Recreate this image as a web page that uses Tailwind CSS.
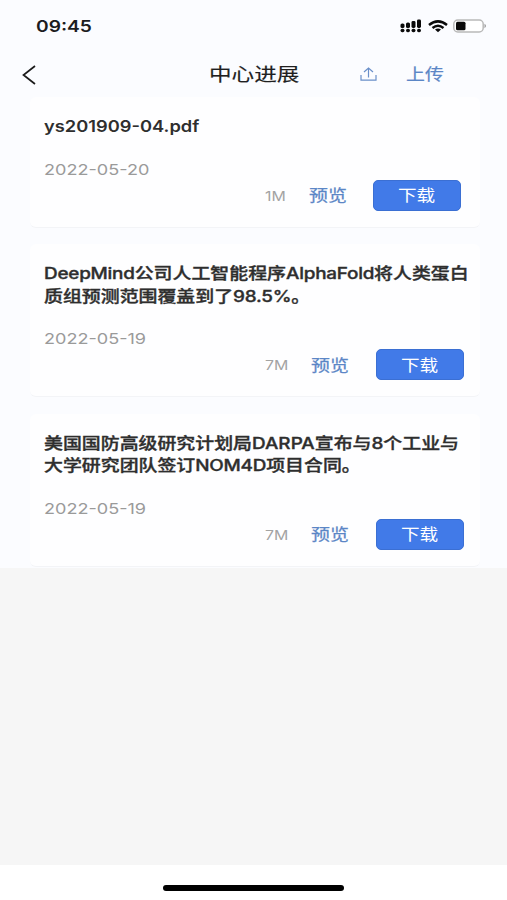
<!DOCTYPE html>
<html lang="zh-CN">
<head>
    <meta charset="UTF-8">
    <meta name="viewport" content="width=device-width, initial-scale=1.0">
    <title>中心进展</title>
    <script src="https://cdn.jsdelivr.net/npm/@tailwindcss/browser@4"></script>
</head>
<body class="bg-[#f6f6f6] font-['Inter','Noto_Sans_CJK_SC',sans-serif] h-[900px] flex flex-col overflow-hidden whitespace-nowrap">

    <div class="bg-[#fbfcff] h-[568px] shrink-0">
        <!-- Status bar -->
        <div class="h-[52px] flex items-center justify-between pl-9 pr-5">
            <span class="text-[16px] font-semibold text-[#1c1c1e] origin-left scale-x-[1.2]">09:45</span>
            <div class="flex items-center">
                <svg class="w-[22px] h-[14px] mr-[6px]" viewBox="0 0 22 14" fill="#0a0a0a">
                    <rect x="0.5" y="4.5" width="4" height="4.5" rx="1.6"/>
                    <rect x="6" y="3.5" width="4" height="5.5" rx="1.6"/>
                    <rect x="11.5" y="2" width="4" height="7" rx="1.4"/>
                    <rect x="17" y="0.5" width="4" height="8.5" rx="1.4"/>
                    <rect x="0.5" y="9.7" width="4" height="3.6" rx="1.7"/>
                    <rect x="6" y="9.7" width="4" height="3.6" rx="1.7"/>
                    <rect x="11.5" y="9.7" width="4" height="3.6" rx="1.7"/>
                    <rect x="17" y="9.7" width="4" height="3.6" rx="1.7"/>
                </svg>
                <svg class="w-[20px] h-[13px] mr-[5px]" viewBox="0 0 20 13" fill="none" stroke="#0a0a0a" stroke-width="2.5">
                    <path d="M1 5 Q10 -2.2 19 5"/>
                    <path d="M4.5 8 Q10 3.6 15.5 8"/>
                    <path d="M7 9.6 Q10 7.6 13 9.6 L10 12.3 Z" fill="#0a0a0a" stroke="none"/>
                </svg>
                <svg class="w-[34px] h-[14px]" viewBox="0 0 34 14">
                    <rect x="0.8" y="1" width="29.4" height="12" rx="4" fill="#fff" stroke="#b9b9b9" stroke-width="1.5"/>
                    <rect x="3" y="2.8" width="9.5" height="8.5" rx="1.5" fill="#0a0a0a"/>
                    <path d="M31.5 4.8 Q34.5 7 31.5 9.2 Z" fill="#999"/>
                </svg>
            </div>
        </div>

        <!-- Nav bar -->
        <div class="h-[45px] flex items-center pl-[22px]">
            <svg class="w-[14px] h-[20px] mr-[173px]" viewBox="0 0 14 20" fill="none" stroke="#1a1a1a" stroke-width="1.7">
                <path d="M13 1 L1.5 10 L13 19"/>
            </svg>
            <h1 class="w-[151px] text-[18.5px] text-[#1f1f1f] [-webkit-text-stroke:0.15px] origin-left scale-x-[1.22]">中心进展</h1>
            <svg class="w-[17px] h-[14px] mr-[29px] -mt-[2px]" viewBox="0 0 17 14" fill="none" stroke="#6a8fc9" stroke-width="1.2">
                <path d="M1 8 V13.2 H16 V8"/>
                <path d="M8.5 10.5 V1 M4 5 L8.5 1 L13 5"/>
            </svg>
            <a class="text-[15.5px] text-[#5b86c6] [-webkit-text-stroke:0.2px] origin-left scale-x-[1.22]">上传</a>
        </div>

        <!-- File list -->
        <div class="pl-[30px] pr-[27px] flex flex-col gap-[16.5px]">
            <div class="bg-[#fefeff] rounded-md border-b border-[#f3f4f7] pt-[19px] pb-4 pl-[14px]">
                <h2 class="w-[350px] text-[15.5px] leading-[22.5px] font-semibold text-[#2e2e2e] origin-left scale-x-[1.18]">ys201909-04.pdf</h2>
                <p class="w-[350px] mt-[21px] text-[15px] leading-5 text-[#9a9a9a] origin-left scale-x-[1.205]">2022-05-20</p>
                <div class="flex items-center pl-[221px]">
                    <span class="w-[44px] pt-[3px] text-[13px] text-[#a3a3a3] origin-left scale-x-[1.22]">1M</span>
                    <a class="w-[64px] pt-[2px] text-[15.5px] text-[#5b86c6] [-webkit-text-stroke:0.25px] origin-left scale-x-[1.22]">预览</a>
                    <button class="w-[88px] h-[31px] pt-[2px] rounded-[5px] bg-[#417ae8] border border-[#3b6fd3] flex items-center justify-center text-white text-[15.5px]"><span class="scale-x-[1.2]">下载</span></button>
                </div>
            </div>
            <div class="bg-[#fefeff] rounded-md border-b border-[#f3f4f7] pt-[19px] pb-4 pl-[14px]">
                <h2 class="w-[350px] text-[15.5px] leading-[22.5px] font-medium text-[#2e2e2e] [-webkit-text-stroke:0.35px] origin-left scale-x-[1.22]"><span class="tracking-[-0.2px]">DeepMind</span>公司人工智能程序<span class="tracking-[-0.2px]">AlphaFold</span>将人类蛋白<br>质组预测范围覆盖到了<span class="tracking-[-0.2px]">98.5%</span>。</h2>
                <p class="w-[350px] mt-[21px] text-[15px] leading-5 text-[#9a9a9a] origin-left scale-x-[1.205]">2022-05-19</p>
                <div class="flex items-center pl-[221px]">
                    <span class="w-[46px] pt-[3px] text-[13px] text-[#a3a3a3] origin-left scale-x-[1.22]">7M</span>
                    <a class="w-[65px] pt-[2px] text-[15.5px] text-[#5b86c6] [-webkit-text-stroke:0.25px] origin-left scale-x-[1.22]">预览</a>
                    <button class="w-[88px] h-[31px] pt-[2px] rounded-[5px] bg-[#417ae8] border border-[#3b6fd3] flex items-center justify-center text-white text-[15.5px]"><span class="scale-x-[1.2]">下载</span></button>
                </div>
            </div>
            <div class="bg-[#fefeff] rounded-md border-b border-[#f3f4f7] pt-[19px] pb-4 pl-[14px]">
                <h2 class="w-[350px] text-[15.5px] leading-[22.5px] font-medium text-[#2e2e2e] [-webkit-text-stroke:0.35px] origin-left scale-x-[1.22]">美国国防高级研究计划局DARPA宣布与8个工业与<br>大学研究团队签订<span class="tracking-[-0.2px]">NOM4D</span>项目合同。</h2>
                <p class="w-[350px] mt-[21px] text-[15px] leading-5 text-[#9a9a9a] origin-left scale-x-[1.205]">2022-05-19</p>
                <div class="flex items-center pl-[221px]">
                    <span class="w-[46px] pt-[3px] text-[13px] text-[#a3a3a3] origin-left scale-x-[1.22]">7M</span>
                    <a class="w-[65px] pt-[2px] text-[15.5px] text-[#5b86c6] [-webkit-text-stroke:0.25px] origin-left scale-x-[1.22]">预览</a>
                    <button class="w-[88px] h-[31px] pt-[2px] rounded-[5px] bg-[#417ae8] border border-[#3b6fd3] flex items-center justify-center text-white text-[15.5px]"><span class="scale-x-[1.2]">下载</span></button>
                </div>
            </div>
        </div>
    </div>

    <!-- Home indicator -->
    <div class="mt-auto h-[35px] bg-white flex justify-center pt-[20px]">
        <div class="w-[181px] h-[6px] rounded-full bg-black"></div>
    </div>
</body>
</html>
